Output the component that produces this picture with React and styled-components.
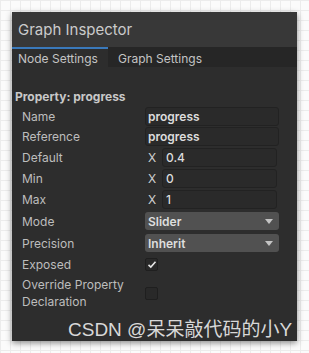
import styled, { createGlobalStyle } from 'styled-components';

const GlobalStyle = createGlobalStyle`
  html, body {
    margin: 0;
    padding: 0;
  }
  body {
    width: 309px;
    height: 353px;
    overflow: hidden;
    font-family: Inter, "Noto Sans", sans-serif;
    background-color: #fbfbfb;
    background-image:
      linear-gradient(#ececec 1px, transparent 1px),
      linear-gradient(90deg, #ececec 1px, transparent 1px);
    background-size: 10px 10px;
  }
`;

const Stage = styled.div`
  padding: 12px;
  position: relative;
`;

const Panel = styled.div`
  width: 285px;
  height: 329px;
  background: #2d2d2d;
  box-shadow: 0 2px 6px rgba(0, 0, 0, 0.45);
  display: flex;
  flex-direction: column;
`;

const TitleBar = styled.div`
  height: 35px;
  background: #383838;
  color: #cbcbcb;
  font-size: 15px;
  display: flex;
  align-items: center;
  padding-left: 6px;
`;

const Tabs = styled.div`
  display: flex;
  height: 20px;
  background: #262626;
`;

const Tab = styled.div`
  font-size: 12px;
  color: #c4c4c4;
  padding-left: ${({ active }) => (active ? 6 : 10)}px;
  display: flex;
  align-items: center;
  background: ${({ active }) => (active ? '#2d2d2d' : 'transparent')};
  border-top: 2px solid ${({ active }) => (active ? '#3a79bb' : 'transparent')};
  width: ${({ w }) => w}px;
  box-sizing: border-box;
`;

const Body = styled.div`
  padding: 23px 18px 0 3px;
  display: flex;
  flex-direction: column;
`;

const Header = styled.div`
  font-size: 12px;
  font-weight: 700;
  color: #c8c8c8;
  height: 13px;
  line-height: 13px;
  margin-bottom: 3px;
`;

const Row = styled.div`
  display: grid;
  grid-template-columns: 130px 134px;
  align-items: center;
  min-height: ${({ h }) => h || 21}px;
`;

const Label = styled.div`
  font-size: 12px;
  color: #bdbdbd;
  padding-left: 7px;
  line-height: 17px;
`;

const TextField = styled.div`
  height: 19px;
  box-sizing: border-box;
  background: #2a2a2a;
  border: 1px solid #222;
  border-radius: 3px;
  font-size: 12px;
  font-weight: 600;
  color: #dcdcdc;
  padding-left: 2px;
  display: flex;
  align-items: center;
`;

const NumberRow = styled.div`
  display: flex;
  align-items: center;
`;

const Axis = styled.span`
  font-size: 12px;
  color: #d0d0d0;
  width: 17px;
  padding-left: 3px;
  box-sizing: border-box;
`;

const NumField = styled(TextField)`
  flex: 1;
  margin-right: 2px;
  font-weight: 500;
  padding-left: 3px;
`;

const Dropdown = styled.div`
  height: 18px;
  box-sizing: border-box;
  background: #515151;
  border-radius: 3px;
  font-size: 12px;
  font-weight: 600;
  color: #dedede;
  display: flex;
  align-items: center;
  justify-content: space-between;
  padding: 0 6px 0 3px;
`;

const Caret = styled.span`
  width: 0;
  height: 0;
  border-left: 4px solid transparent;
  border-right: 4px solid transparent;
  border-top: 5px solid #c4c4c4;
`;

const Check = styled.div`
  width: 13px;
  height: 13px;
  box-sizing: border-box;
  background: #292929;
  border: 1px solid #1f1f1f;
  border-radius: 2px;
  display: flex;
  align-items: center;
  justify-content: center;
`;

const Watermark = styled.div`
  position: absolute;
  left: 68px;
  top: 314px;
  font-size: 19px;
  color: #d8d8d8;
  font-family: "Liberation Sans", "Noto Sans CJK SC", sans-serif;
  white-space: nowrap;
`;

const TextRow = ({ label, value, h }) => (
  <Row h={h}>
    <Label>{label}</Label>
    <TextField>{value}</TextField>
  </Row>
);

const NumRow = ({ label, value }) => (
  <Row>
    <Label>{label}</Label>
    <NumberRow>
      <Axis>X</Axis>
      <NumField>{value}</NumField>
    </NumberRow>
  </Row>
);

const DropRow = ({ label, value }) => (
  <Row h={22}>
    <Label>{label}</Label>
    <Dropdown>
      {value}
      <Caret />
    </Dropdown>
  </Row>
);

export default function App() {
  return (
    <>
      <GlobalStyle />
      <Stage>
        <Panel>
          <TitleBar>Graph Inspector</TitleBar>
          <Tabs>
            <Tab active w={96}>Node Settings</Tab>
            <Tab w={100}>Graph Settings</Tab>
          </Tabs>
          <Body>
            <Header>Property: progress</Header>
            <TextRow label="Name" value="progress" h={20} />
            <TextRow label="Reference" value="progress" h={21} />
            <NumRow label="Default" value="0.4" />
            <NumRow label="Min" value="0" />
            <NumRow label="Max" value="1" />
            <DropRow label="Mode" value="Slider" />
            <DropRow label="Precision" value="Inherit" />
            <Row>
              <Label>Exposed</Label>
              <Check>
                <svg width="10" height="9" viewBox="0 0 10 9">
                  <path d="M1.5 4.8 L3.8 7 L8.5 1.8" fill="none" stroke="#e6e6e6" strokeWidth="1.6" />
                </svg>
              </Check>
            </Row>
            <Row h={36}>
              <Label>Override Property<br />Declaration</Label>
              <Check />
            </Row>
          </Body>
        </Panel>
        <Watermark>CSDN @呆呆敲代码的小Y</Watermark>
      </Stage>
    </>
  );
}
